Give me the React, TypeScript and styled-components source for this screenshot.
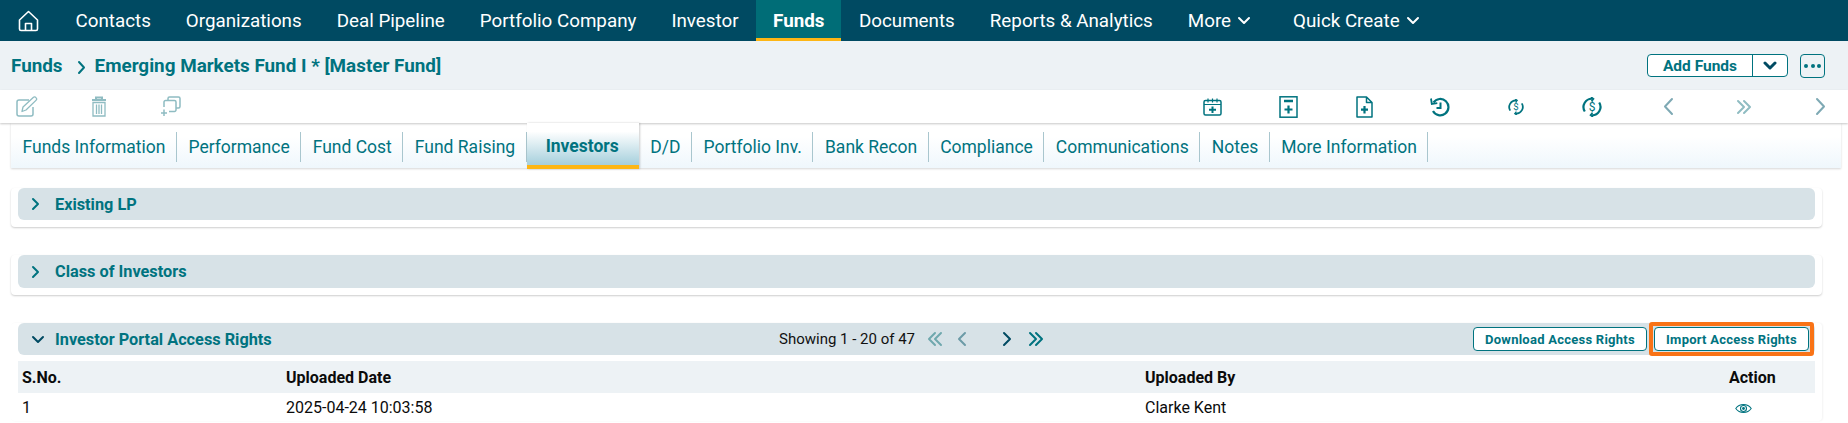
import React, { FC } from "react";
import styled, { createGlobalStyle } from "styled-components";

const teal = "#00737f";
const navy = "#004a62";

const GlobalStyle = createGlobalStyle`
	html, body {
		margin: 0;
		padding: 0;
		background: #fff;
		font-family: Roboto, "Liberation Sans", sans-serif;
		overflow: hidden;
	}
`;

const Page = styled.div`
	width: 1848px;
	height: 423px;
	overflow: hidden;
	display: flex;
	flex-direction: column;
`;

const Nav = styled.nav`
	height: 41px;
	background: ${navy};
	display: flex;
	align-items: stretch;
	padding-left: 18px;
	flex: none;
`;

const HomeLink = styled.a`
	display: flex;
	align-items: center;
	width: 40px;
`;

const NavItem = styled.a<{ $active?: boolean }>`
	display: flex;
	align-items: center;
	gap: 6px;
	padding: 0 ${({ $active }) => ($active ? 17 : 17.5)}px 0;
	box-sizing: border-box;
	color: #fff;
	font-size: 18.8px;
	font-weight: ${({ $active }) => ($active ? 700 : 400)};
	background: ${({ $active }) => ($active ? "#006d77" : "transparent")};
	border-bottom: ${({ $active }) => ($active ? "3px solid #fdb614" : "none")};
	padding-top: ${({ $active }) => ($active ? "3px" : "0")};
	white-space: nowrap;
`;

const QuickCreate = styled(NavItem)`
	margin-left: 7px;
`;

const Breadcrumb = styled.div`
	height: 49px;
	background: #edf2f5;
	display: flex;
	align-items: center;
	padding: 0 23px 0 11px;
	color: ${teal};
	font-size: 18.85px;
	font-weight: 700;
	flex: none;
`;

const CrumbSep = styled.span`
	display: flex;
	margin: 3px 8px 0 14px;
`;

const CrumbActions = styled.div`
	margin-left: auto;
	display: flex;
	align-items: center;
	gap: 12px;
`;

const SplitButton = styled.div`
	display: flex;
	width: 141px;
	height: 23px;
	box-sizing: border-box;
	border: 1px solid ${teal};
	border-radius: 4px;
	background: #fff;
`;

const SplitLabel = styled.span`
	width: 104px;
	border-right: 1px solid ${teal};
	display: flex;
	align-items: center;
	justify-content: center;
	font-size: 15.5px;
	font-weight: 700;
`;

const SplitCaret = styled.span`
	flex: 1;
	display: flex;
	align-items: center;
	justify-content: center;
`;

const MoreButton = styled.button`
	width: 25px;
	height: 24px;
	padding: 0;
	border: 1px solid ${teal};
	border-radius: 4px;
	background: #edf2f5;
	display: flex;
	align-items: center;
	justify-content: center;
	gap: 2.5px;
`;

const Dot = styled.i`
	width: 4px;
	height: 4px;
	border-radius: 50%;
	background: ${teal};
`;

const ActionBar = styled.div`
	height: 33px;
	background: #fff;
	display: flex;
	align-items: center;
	justify-content: space-between;
	padding: 0 18px 0 16px;
	box-shadow: 0 1px 2px rgba(0, 0, 0, 0.22);
	position: relative;
	flex: none;
`;

const IconGroup = styled.div<{ $gap: number }>`
	display: flex;
	gap: ${({ $gap }) => $gap}px;
`;

const IconSlot = styled.span<{ $off?: boolean }>`
	width: 22px;
	height: 24px;
	display: flex;
	align-items: center;
	justify-content: center;
	color: ${({ $off }) => ($off ? "#8fbcc2" : teal)};
`;

const RightSlot = styled(IconSlot)`
	width: 20px;
`;

const Tabs = styled.div`
	display: flex;
	height: 45px;
	margin: 0 7px 0 11px;
	background: linear-gradient(#fff 30%, #eff7fc);
	box-shadow: 0 1px 2px rgba(0, 0, 0, 0.16);
	flex: none;
	align-items: stretch;
`;

const Tab = styled.a<{ $active?: boolean }>`
	position: relative;
	display: flex;
	align-items: center;
	box-sizing: border-box;
	white-space: nowrap;
	color: ${teal};
	font-size: 17.5px;
	padding: 3px 11.5px 0;
	${({ $active }) =>
		$active
			? `
		font-weight: 700;
		padding: 4px 20px 0 19px;
		margin-bottom: -1px;
		background: linear-gradient(#fff 20%, #a5cfdc);
		border-bottom: 4px solid #fdb614;
		box-shadow: 1px 0 2px rgba(0,0,0,.2);
	`
			: `
		&::after {
			content: "";
			position: absolute;
			right: 0;
			top: 9px;
			bottom: 6px;
			width: 1px;
			background: #a9c6ce;
		}
	`}
`;

const Content = styled.div`
	display: flex;
	flex-direction: column;
	margin: 20px 26px 0 11px;
	gap: 28px;
`;

const Card = styled.section`
	padding: 0 7px 7px;
	border-radius: 4px;
	background: #fff;
	box-shadow: 0 1px 2px rgba(0, 0, 0, 0.2);
`;

const OpenCard = styled(Card)`
	padding-bottom: 0;
	box-shadow: 1px 0 2px rgba(0, 0, 0, 0.05);
`;

const SectionHeader = styled.header<{ $tall?: boolean }>`
	height: ${({ $tall }) => ($tall ? 33 : 32)}px;
	background: #d7e2e7;
	border-radius: 6px;
	display: flex;
	align-items: center;
	padding-left: 13px;
	color: ${teal};
	font-size: 16.3px;
	font-weight: 700;
	position: relative;
`;

const Chevron = styled.span`
	display: flex;
	width: 24px;
	margin-right: 0;
`;

const Pager = styled.div`
	position: absolute;
	left: 761px;
	top: 0;
	bottom: 0;
	display: flex;
	align-items: center;
	color: #111;
	font-weight: 400;
	font-size: 15px;
	white-space: nowrap;
`;

const PagerIcon = styled.span<{ $left: number }>`
	display: flex;
	margin-left: ${({ $left }) => $left}px;
`;

const HeaderButtons = styled.div`
	margin-left: auto;
	margin-right: 1px;
	display: flex;
	align-items: center;
`;

const OutlineButton = styled.button`
	height: 24px;
	box-sizing: border-box;
	border: 1px solid ${teal};
	border-radius: 4px;
	background: #fff;
	color: ${teal};
	font-family: inherit;
	font-size: 13px;
	font-weight: 700;
	letter-spacing: 0.25px;
	padding: 0;
	width: 174px;
`;

const Highlight = styled.span`
	display: flex;
	margin-left: 2px;
	padding: 1px;
	border: 4px solid #f97316;
	border-radius: 3px;
`;

const ImportButton = styled(OutlineButton)`
	width: 155px;
`;

const Row = styled.div<{ $head?: boolean }>`
	display: grid;
	grid-template-columns: 264px 859px 584px 1fr;
	align-items: center;
	height: ${({ $head }) => ($head ? 32 : 28)}px;
	margin-top: ${({ $head }) => ($head ? 6 : 0)}px;
	padding-left: 4px;
	background: ${({ $head }) => ($head ? "#edf2f5" : "#fff")};
	color: #0b0b0b;
	font-size: 16px;
	font-weight: ${({ $head }) => ($head ? 700 : 400)};
`;

const ActionCell = styled.div`
	display: flex;
	padding: 2px 0 0 6px;
	color: ${teal};
`;

const NAV = ["Contacts", "Organizations", "Deal Pipeline", "Portfolio Company", "Investor"];
const NAV_AFTER = ["Documents", "Reports & Analytics"];
const TABS_BEFORE = ["Funds Information", "Performance", "Fund Cost", "Fund Raising"];
const TABS_AFTER = ["D/D", "Portfolio Inv.", "Bank Recon", "Compliance", "Communications", "Notes", "More Information"];

const Path: FC<{ d: string; size?: number; w?: number; color?: string; sw?: number; h?: number }> = ({
	d,
	size = 12,
	w,
	h,
	color = "currentColor",
	sw = 2,
}) => (
	<svg width={w ?? size} height={h ?? size} viewBox={`0 0 ${w ?? size} ${h ?? size}`} fill="none" stroke={color} strokeWidth={sw} strokeLinecap="round" strokeLinejoin="round">
		<path d={d} />
	</svg>
);

const Home = () => (
	<svg width="21" height="22" viewBox="0 0 21 22" fill="none" stroke="#fff" strokeWidth="1.6" strokeLinejoin="round">
		<path d="M1.5 10 10.5 1.5 19.5 10V19a1.5 1.5 0 0 1-1.5 1.5H3A1.5 1.5 0 0 1 1.5 19Z" />
		<path d="M7.5 20.5V13.5h6v7" />
	</svg>
);

const Edit = () => (
	<svg width="22" height="21" viewBox="0 0 22 21" fill="none" stroke="currentColor" strokeWidth="1.3" strokeLinejoin="round">
		<path d="M13 4H3a2 2 0 0 0-2 2v12a2 2 0 0 0 2 2h12a2 2 0 0 0 2-2v-7" strokeWidth="1.5" />
		<path d="M6 15.5 7 11 17.5 1.2a1.5 1.5 0 0 1 2.2.2l.6.7a1.5 1.5 0 0 1-.1 2L10 14Z" />
	</svg>
);

const Trash = () => (
	<svg width="16" height="21" viewBox="0 0 16 21" fill="none" stroke="currentColor" strokeWidth="1.3">
		<path d="M1 4h14M5 4V1.5h6V4" strokeWidth="2" />
		<path d="M2 6.5V20h12V6.5ZM5.5 8.5v9.5M8 8.5v9.5M10.5 8.5v9.5" />
	</svg>
);

const Copy = () => (
	<svg width="22" height="21" viewBox="0 0 22 21" fill="none" stroke="currentColor" strokeWidth="1.5">
		<path d="M8 4.5V2.5A1.5 1.5 0 0 1 9.5 1h9A1.5 1.5 0 0 1 20 2.5v8a1.5 1.5 0 0 1-1.5 1.5H16" />
		<path d="M4 11V6a1.5 1.5 0 0 1 1.5-1.5h9A1.5 1.5 0 0 1 16 6v8a1.5 1.5 0 0 1-1.5 1.5H9" />
		<path d="M4 13.5V20M1 17h6" />
	</svg>
);

const Calendar = () => (
	<svg width="19" height="18" viewBox="0 0 19 18" fill="none" stroke="currentColor" strokeWidth="1.5">
		<rect x="1" y="2.5" width="17" height="14.5" rx="1.5" />
		<path d="M1 6.5h17M5 .5v4M9.5 .5v4M14 .5v4" strokeWidth="1.2" />
		<path d="M9.5 8.5v6.5M6 11.7h7" strokeWidth="2" />
	</svg>
);

const DocPlus = () => (
	<svg width="19" height="22" viewBox="0 0 19 22" fill="none" stroke="currentColor" strokeWidth="1.5">
		<rect x="1" y=".8" width="17" height="20.4" />
		<path d="M5 5h9" strokeWidth="2.5" />
		<path d="M9.5 9.5v8M5.5 13.5h8" strokeWidth="2.2" />
	</svg>
);

const FilePlus = () => (
	<svg width="17" height="22" viewBox="0 0 17 22" fill="none" stroke="currentColor" strokeWidth="1.5" strokeLinejoin="round">
		<path d="M1 1h9.5L16 6.5V21H1ZM10.5 1v5.5H16" />
		<path d="M8.5 10v7.5M5 13.7h7" strokeWidth="2.2" />
	</svg>
);

const History = () => (
	<svg width="20" height="20" viewBox="0 0 20 20" fill="none" stroke="currentColor" strokeWidth="2.2">
		<path d="M3.5 5.5A8.2 8.2 0 1 1 3 14" />
		<path d="M1 1.5l.8 5.5 5.5-.8" strokeWidth="1.8" />
		<path d="M10.5 5.5v5.5H6.5" strokeWidth="2" />
	</svg>
);

const Dollar: FC<{ size: number }> = ({ size }) => (
	<svg width={size} height={size} viewBox="0 0 20 20" fill="none" stroke="currentColor" strokeWidth="2.2">
		<path d="M2.8 14.5A8.3 8.3 0 0 1 10.5 1.8M17.2 5.5a8.3 8.3 0 0 1-7.7 12.7" />
		<path d="M9 0l2.5 1.8L9.5 4.2M11 20l-2.5-1.8 2-2.4" strokeWidth="1.6" />
		<text x="10" y="14.2" fontSize="12" fontFamily="Roboto, sans-serif" textAnchor="middle" fill="currentColor" stroke="none">
			$
		</text>
	</svg>
);

const Eye = () => (
	<svg width="17" height="13" viewBox="0 0 17 13" fill="none" stroke="currentColor" strokeWidth="1.1">
		<path d="M.8 6.5C4.5 1.2 12.5 1.2 16.2 6.5 12.5 11.8 4.5 11.8 .8 6.5Z" />
		<circle cx="8.5" cy="6.5" r="3" />
		<circle cx="8.5" cy="6.5" r="1.4" fill="currentColor" stroke="none" />
	</svg>
);

const right = "M2 2l5 5-5 5";
const pagerLeft = "M8 2 2 8l6 6";
const pagerRight = "M2 2l6 6-6 6";
const doubleRight = "M2 2l6 6-6 6M8 2l6 6-6 6";
const doubleLeft = "M8 2 2 8l6 6M14 2 8 8l6 6";
const down = "M2 2l5 5 5-5";

const App: FC = () => (
	<Page>
		<GlobalStyle />
		<Nav>
			<HomeLink>
				<Home />
			</HomeLink>
			{NAV.map((n) => (
				<NavItem key={n}>{n}</NavItem>
			))}
			<NavItem $active>Funds</NavItem>
			{NAV_AFTER.map((n) => (
				<NavItem key={n}>{n}</NavItem>
			))}
			<NavItem>
				More <Path d={down} w={14} h={9} color="#fff" />
			</NavItem>
			<QuickCreate>
				Quick Create <Path d={down} w={14} h={9} color="#fff" />
			</QuickCreate>
		</Nav>
		<Breadcrumb>
			Funds
			<CrumbSep>
				<Path d="M2 2l5 5.5-5 5.5" w={10} h={15} color={teal} />
			</CrumbSep>
			Emerging Markets Fund I * [Master Fund]
			<CrumbActions>
				<SplitButton>
					<SplitLabel>Add Funds</SplitLabel>
					<SplitCaret>
						<Path d={down} w={14} h={9} color={navy} sw={3} />
					</SplitCaret>
				</SplitButton>
				<MoreButton>
					<Dot />
					<Dot />
					<Dot />
				</MoreButton>
			</CrumbActions>
		</Breadcrumb>
		<ActionBar>
			<IconGroup $gap={50}>
				<IconSlot $off>
					<Edit />
				</IconSlot>
				<IconSlot $off>
					<Trash />
				</IconSlot>
				<IconSlot $off>
					<Copy />
				</IconSlot>
			</IconGroup>
			<IconGroup $gap={56}>
				<RightSlot>
					<Calendar />
				</RightSlot>
				<RightSlot>
					<DocPlus />
				</RightSlot>
				<RightSlot>
					<FilePlus />
				</RightSlot>
				<RightSlot>
					<History />
				</RightSlot>
				<RightSlot>
					<Dollar size={16} />
				</RightSlot>
				<RightSlot>
					<Dollar size={20} />
				</RightSlot>
				<RightSlot $off>
					<Path d="M9 2 2 9.5 9 17" w={11} h={19} color="#7ea9b4" />
				</RightSlot>
				<RightSlot $off>
					<Path d={doubleRight} w={16} h={16} color="#8fbcc2" />
				</RightSlot>
				<RightSlot $off>
					<Path d="M2 2l7 7.5L2 17" w={11} h={19} color="#7ea9b4" />
				</RightSlot>
			</IconGroup>
		</ActionBar>
		<Tabs>
			{TABS_BEFORE.map((t) => (
				<Tab key={t}>{t}</Tab>
			))}
			<Tab $active>Investors</Tab>
			{TABS_AFTER.map((t) => (
				<Tab key={t}>{t}</Tab>
			))}
		</Tabs>
		<Content>
			<Card>
				<SectionHeader>
					<Chevron>
						<Path d={right} size={14} color={teal} />
					</Chevron>
					Existing LP
				</SectionHeader>
			</Card>
			<Card>
				<SectionHeader $tall>
					<Chevron>
						<Path d={right} size={14} color={teal} />
					</Chevron>
					Class of Investors
				</SectionHeader>
			</Card>
			<OpenCard>
				<SectionHeader>
					<Chevron>
						<Path d={down} w={14} h={9} color={navy} />
					</Chevron>
					Investor Portal Access Rights
					<Pager>
						Showing 1 - 20 of 47
						<PagerIcon $left={12}>
							<Path d={doubleLeft} w={16} h={16} color="#6fa8ad" />
						</PagerIcon>
						<PagerIcon $left={14}>
							<Path d={pagerLeft} w={10} h={16} color="#6c9ba7" />
						</PagerIcon>
						<PagerIcon $left={35}>
							<Path d={pagerRight} w={10} h={16} color={navy} />
						</PagerIcon>
						<PagerIcon $left={16}>
							<Path d={doubleRight} w={16} h={16} color={teal} />
						</PagerIcon>
					</Pager>
					<HeaderButtons>
						<OutlineButton>Download Access Rights</OutlineButton>
						<Highlight>
							<ImportButton>Import Access Rights</ImportButton>
						</Highlight>
					</HeaderButtons>
				</SectionHeader>
				<Row $head>
					<div>S.No.</div>
					<div>Uploaded Date</div>
					<div>Uploaded By</div>
					<div>Action</div>
				</Row>
				<Row>
					<div>1</div>
					<div>2025-04-24 10:03:58</div>
					<div>Clarke Kent</div>
					<ActionCell>
						<Eye />
					</ActionCell>
				</Row>
			</OpenCard>
		</Content>
	</Page>
);

export default App;
